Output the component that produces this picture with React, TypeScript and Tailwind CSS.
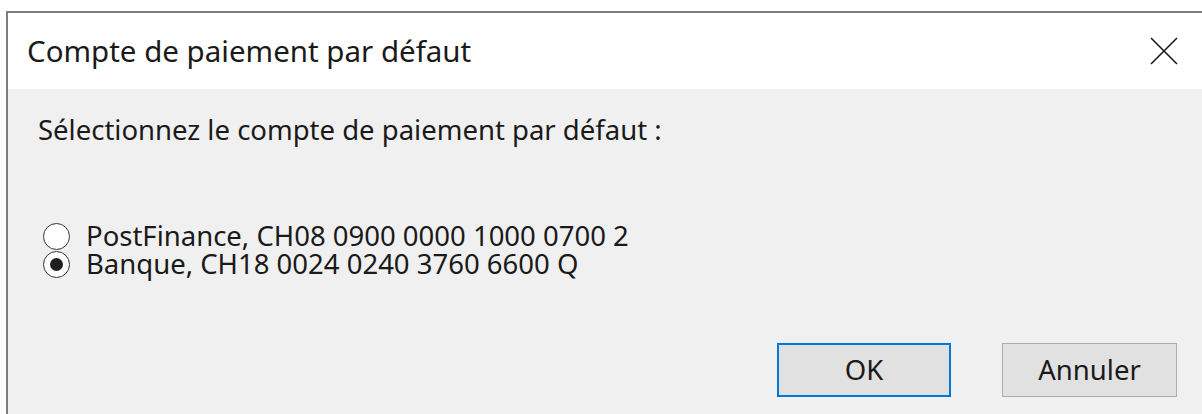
import { useState } from "react";

const accounts = [
  { id: "postfinance", label: "PostFinance, CH08 0900 0000 1000 0700 2" },
  { id: "banque", label: "Banque, CH18 0024 0240 3760 6600 Q" },
];

function CloseIcon() {
  return (
    <svg width="28" height="28" viewBox="0 0 28 28" fill="none">
      <path d="M1 1 L27 27 M27 1 L1 27" stroke="#1a1a1a" strokeWidth="1.6" />
    </svg>
  );
}

function Radio({ checked }: { checked: boolean }) {
  return (
    <span className="flex h-[27px] w-[27px] shrink-0 items-center justify-center rounded-full border-[1.5px] border-[#333] bg-white">
      {checked && <span className="h-[13px] w-[13px] rounded-full bg-[#1f1f1f]" />}
    </span>
  );
}

export default function App() {
  const [selected, setSelected] = useState("banque");

  return (
    <div
      className="h-[414px] w-[1202px] overflow-hidden bg-white pl-[6px] pt-[11px] text-[#1a1a1a]"
      style={{ fontFamily: '"Noto Sans", "Open Sans", sans-serif' }}
    >
      <div className="flex h-full w-[1230px] flex-col border-l-2 border-t-2 border-[#7d7d7d]">
        {/* Title bar */}
        <div className="flex h-[76px] shrink-0 items-center bg-white pl-[19px] pr-[58px]">
          <span className="flex-1 text-[29.5px] leading-none">Compte de paiement par défaut</span>
          <CloseIcon />
        </div>

        {/* Body */}
        <div className="flex flex-1 flex-col bg-[#f0f0f0] pl-[30px] text-[27.5px]">
          <p className="mt-[27px] leading-[28px]">
            Sélectionnez le compte de paiement par défaut :
          </p>

          <div className="mt-[78px] flex flex-col pl-[5px]">
            {accounts.map((a) => (
              <label
                key={a.id}
                className="flex h-[28px] cursor-default items-center gap-[16px] leading-[28px]"
                onClick={() => setSelected(a.id)}
              >
                <Radio checked={selected === a.id} />
                <span>{a.label}</span>
              </label>
            ))}
          </div>

          {/* Buttons */}
          <div className="mt-[65px] flex gap-[51px] pl-[739px]">
            <button className="flex h-[54px] w-[174px] items-center justify-center border-2 border-[#0078d7] bg-[#e1e1e1]">
              OK
            </button>
            <button className="flex h-[54px] w-[175px] items-center justify-center border border-[#adadad] bg-[#e1e1e1]">
              Annuler
            </button>
          </div>
        </div>
      </div>
    </div>
  );
}
